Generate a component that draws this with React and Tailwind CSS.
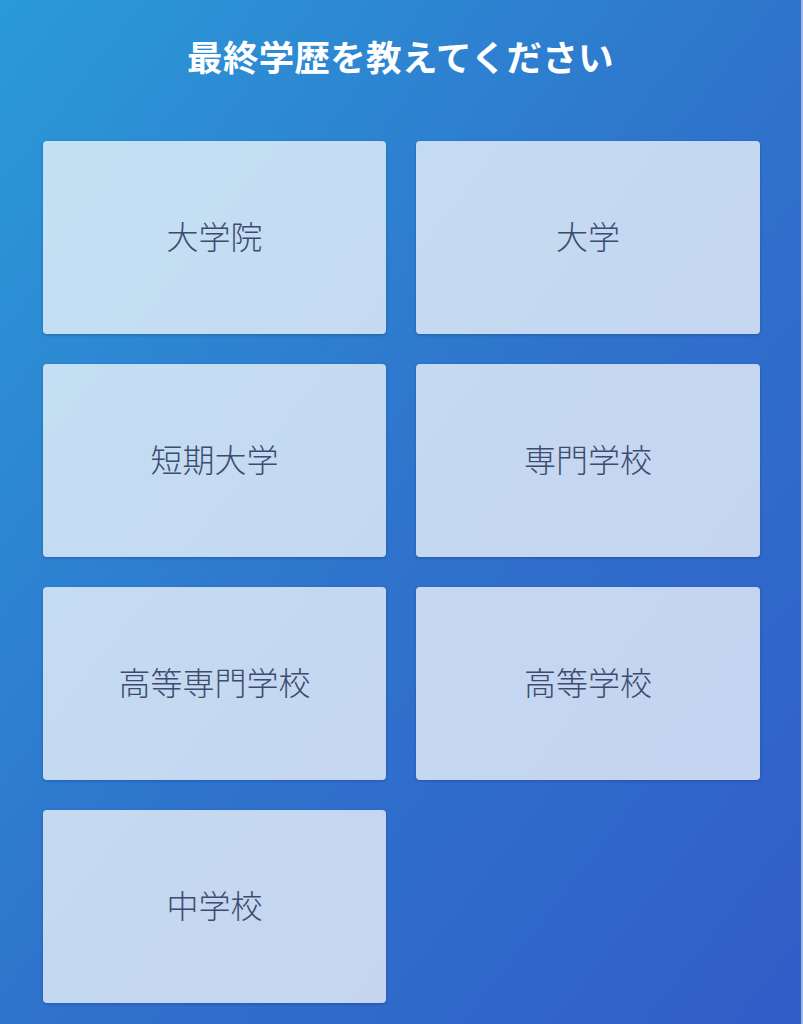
import React from "react";

const options = [
  "大学院",
  "大学",
  "短期大学",
  "専門学校",
  "高等専門学校",
  "高等学校",
  "中学校",
];

const App = () => {
  return (
    <main
      className="w-[803px] h-[1024px] overflow-hidden bg-linear-to-br from-[#2a9ad8] via-[#2f74cc] to-[#315dc8] border-r-2 border-[#9fb6ea]"
      style={{ fontFamily: '"Noto Sans CJK JP", "Noto Sans", sans-serif' }}
    >
      <h1 className="pt-[31px] text-center text-white font-bold text-[35.5px] leading-[50px] tracking-[0.3px]">
        最終学歴を教えてください
      </h1>

      <div className="grid grid-cols-[343px_344px] gap-x-[30px] gap-y-[30px] pl-[43px] mt-[60px]">
        {options.map((label) => (
          <button
            key={label}
            className="h-[193px] pb-[5px] rounded-[4px] bg-white/72 shadow-[0_1px_3px_rgba(20,40,110,0.35)] flex items-center justify-center text-[32px] font-light text-[#3c4b6e]"
          >
            {label}
          </button>
        ))}
      </div>
    </main>
  );
};

export default App;
